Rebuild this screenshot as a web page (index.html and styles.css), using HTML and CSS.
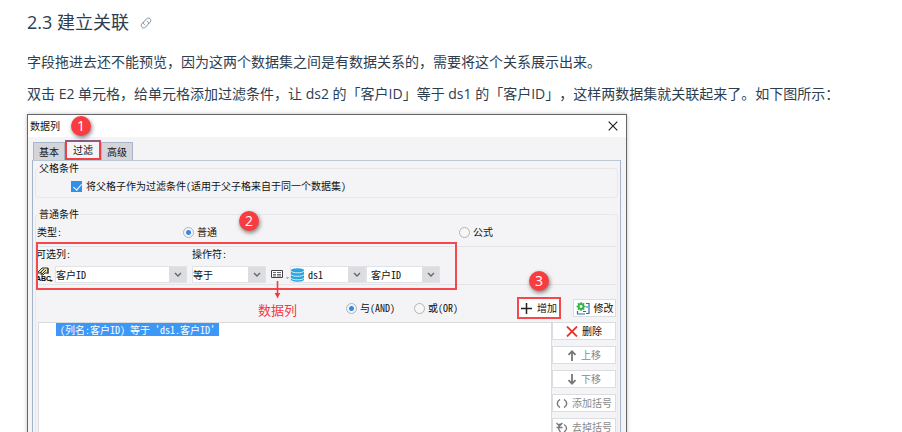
FILE: index.html
```html
<!DOCTYPE html>
<html lang="zh-CN">
<head>
  <meta charset="UTF-8" />
  <title>建立关联</title>
  <link rel="stylesheet" href="styles.css">
</head>
<body>
  <main class="article">
    <h3 class="title">2.3 建立关联
      <a class="anchor" href="#" aria-label="2.3 建立关联">
        <svg width="12" height="12" viewBox="0 0 24 24" fill="none" stroke="currentColor" stroke-width="2" stroke-linecap="round">
          <path d="M9 15.5c-2.6-1.7-2.600-4.600-.7-6.500l4.600-5.200c2-2.200 5-2.300 7-.5s2.200 4.800.3 7l-3 3.400"/>
          <path d="M15 8.500c2.600 1.700 2.600 4.600.7 6.500l-4.600 5.200c-2 2.200-5 2.300-7 .5s-2.200-4.800-.3-7l3-3.400"/>
        </svg>
      </a>
    </h3>
    <p>字段拖进去还不能预览，因为这两个数据集之间是有数据关系的，需要将这个关系展示出来。</p>
    <p>双击 E2 单元格，给单元格添加过滤条件，让 ds2 的「客户ID」等于 ds1 的「客户ID」，这样两数据集就关联起来了。如下图所示：</p>

    <!-- 数据列 对话框 -->
    <section class="dialog">
      <span class="badge badge-1">1</span>
      <header class="dialog-title">
        <span>数据列</span>
        <button class="close" aria-label="关闭">
          <svg width="10" height="10" viewBox="0 0 10 10" stroke="#222" stroke-width="1.2"><path d="M.7.7l8.600 8.600M9.300.7L.7 9.300"/></svg>
        </button>
      </header>
      <nav class="tabs">
        <button class="tab">基本</button>
        <button class="tab active">过滤</button>
        <button class="tab">高级</button>
      </nav>

      <div class="pane">
        <fieldset class="group">
          <legend>父格条件</legend>
          <label class="line parent-line"><input type="checkbox" checked>将父格子作为过滤条件(适用于父子格来自于同一个数据集)</label>
        </fieldset>

        <fieldset class="group group-main">
          <legend>普通条件</legend>
          <span class="badge badge-2">2</span>
          <div class="line type-line">
            <span>类型:</span>
            <label><input type="radio" name="type" checked>普通</label>
            <label><input type="radio" name="type">公式</label>
          </div>

          <div class="filter">
            <div class="filter-labels">
              <label for="column">可选列:</label>
              <label for="operator">操作符:</label>
            </div>
            <div class="filter-fields">
              <svg class="abc-icon" width="18" height="17" viewBox="0 0 18 17">
                <path d="M2 6l4-4h6v5H9L7 9H5l1-2H2z" fill="#e8dca8" stroke="#333"/>
                <path d="M4 7l4-4M6 8l4-4M12 2v6" stroke="#333"/>
                <text x="0" y="15" class="abc-text">ABC</text>
                <path d="M13 14h4l-2 2z" fill="#222"/>
              </svg>
              <span class="combo combo-column">
                <select id="column"><option>客户ID</option></select>
                <svg class="arrow" width="8" height="5" viewBox="0 0 8 5"><path d="M1 1l3 3 3-3"/></svg>
              </span>
              <span class="combo combo-operator">
                <select id="operator"><option>等于</option></select>
                <svg class="arrow" width="8" height="5" viewBox="0 0 8 5"><path d="M1 1l3 3 3-3"/></svg>
              </span>
              <svg class="field-icon" width="18" height="9" viewBox="0 0 18 9">
                <path d="M.5.5h11v7H.5z" fill="#fff" stroke="#444"/>
                <path d="M2 2.500h3M2 4.500h3M2 6h3M6 2.500h4M6 4.500h4M6 6h4" stroke="#444" stroke-width=".8"/>
                <path d="M15 7h3l-1 2h-1z" fill="#aaa"/>
              </svg>
              <span class="combo combo-dataset">
                <svg class="db-icon" width="13" height="14" viewBox="0 0 13 14">
                  <path d="M0 2.500C0-.4 13-.4 13 2.500v9c0 3-13 3-13 0z" fill="#2aa5e0"/>
                  <path d="M0 3c1 2.400 12 2.400 13 0M0 6.500c1 2.400 12 2.400 13 0M0 10c1 2.400 12 2.400 13 0" fill="none" stroke="#fff" stroke-width=".8"/>
                </svg>
                <select aria-label="数据集"><option>ds1</option></select>
                <svg class="arrow" width="8" height="5" viewBox="0 0 8 5"><path d="M1 1l3 3 3-3"/></svg>
              </span>
              <span class="combo combo-field">
                <select aria-label="字段"><option>客户ID</option></select>
                <svg class="arrow" width="8" height="5" viewBox="0 0 8 5"><path d="M1 1l3 3 3-3"/></svg>
              </span>
            </div>
            <div class="mark"></div>
            <div class="note">
              <svg width="7" height="18" viewBox="0 0 7 18"><path d="M3.500 0v13" stroke="#f5393d" stroke-width="1.600"/><path d="M.7 12h5.600L3.500 17.500z" fill="#f5393d"/></svg>
              <span>数据列</span>
            </div>
            <span class="badge badge-3">3</span>
          </div>

          <div class="logic">
            <label><input type="radio" name="logic" checked>与(AND)</label>
            <label><input type="radio" name="logic">或(OR)</label>
            <button class="btn add">
              <svg width="11" height="11" viewBox="0 0 11 11" stroke="#222" stroke-width="1.500"><path d="M5.500 0v11M0 5.500h11"/></svg>增加
            </button>
            <button class="btn edit">
              <svg width="14" height="13" viewBox="0 0 14 13">
                <path d="M10 1.500h3v10H10M1.500 9v3" fill="none" stroke="#1b75b5" stroke-width="1.200"/>
                <path d="M1 12h8M10 5h2M7 9.500h3" stroke="#1b75b5" stroke-width="1.200"/>
                <circle cx="5" cy="4.500" r="2.400" fill="none" stroke="#35b548" stroke-width="2"/>
                <path d="M5 0v2M5 7v2M.5 4.500h2M7.500 4.500h2M1.800 1.300l1.400 1.400M6.800 6.300l1.400 1.400M8.200 1.300L6.800 2.700M3.200 6.300L1.800 7.700" stroke="#35b548" stroke-width="1.300"/>
              </svg>修改
            </button>
          </div>

          <div class="result">
            <div class="tree">
              <span class="tree-item">(列名:客户ID) 等于 'ds1.客户ID'</span>
            </div>
            <div class="actions">
              <button class="btn">
                <svg width="12" height="11" viewBox="0 0 12 11" stroke="#e8352e" stroke-width="1.800"><path d="M1 .5l10 10M11 .5l-10 10"/></svg>删除
              </button>
              <button class="btn" disabled>
                <svg width="10" height="11" viewBox="0 0 10 11" fill="none" stroke="#777" stroke-width="1.800"><path d="M5 11V1M1.500 4.800L5 1.300l3.500 3.500"/></svg>上移
              </button>
              <button class="btn" disabled>
                <svg width="10" height="11" viewBox="0 0 10 11" fill="none" stroke="#777" stroke-width="1.800"><path d="M5 0v10M1.500 6.200L5 9.700l3.500-3.500"/></svg>下移
              </button>
              <button class="btn" disabled>
                <svg width="12" height="9" viewBox="0 0 12 9" fill="none" stroke="#777" stroke-width="1.400"><path d="M4 .5C.4 2.500.4 6.500 4 8.500M8 .5c3.600 2 3.600 6 0 8"/></svg>添加括号
              </button>
              <button class="btn" disabled>
                <svg width="12" height="11" viewBox="0 0 12 11" fill="none" stroke="#777" stroke-width="1.300"><path d="M4.500 1.500C2 4 2 7.500 4.500 10M8 2.500c3.400 2 3.400 5.500 0 7.500M.5 1l3 3 3-3M.5 5.500h6"/></svg>去掉括号
              </button>
            </div>
          </div>
        </fieldset>
      </div>
    </section>
  </main>
</body>
</html>
```

FILE: styles.css
```css
* {
  box-sizing: border-box;
}
body {
  margin: 0;
  height: 100vh;
  overflow: hidden;
  background: #fff;
  color: #2c3e50;
  font-family: "Open Sans", "Noto Sans CJK SC", sans-serif;
  font-size: 14px;
  text-spacing-trim: space-all;
}
.article {
  padding: 6px 27px 0;
}
.title {
  margin: 0 0 12px;
  font-size: 18px;
  font-weight: 400;
  line-height: 32px;
}
.anchor {
  margin-left: 6px;
  color: #7f8ba3;
}
p {
  margin: 0 0 8px;
  line-height: 24px;
}

/* dialog */
.dialog {
  position: relative;
  max-width: 600px;
  height: 400px;
  border: 1px solid #666;
  background: #f4f4f6;
  box-shadow: 0 0 4px rgba(0, 0, 0, 0.25);
  color: #111;
  font-family: "Noto Sans Mono CJK SC", "Noto Sans CJK SC", sans-serif;
  font-size: 10px;
  line-height: 14px;
}
button, select {
  font: inherit;
  color: inherit;
}
input {
  appearance: none;
  margin: 0;
  flex: none;
}
label {
  display: flex;
  align-items: center;
}
.dialog-title {
  display: flex;
  align-items: center;
  justify-content: space-between;
  height: 22px;
  padding: 0 8px 0 2px;
  background: #fff;
}
.close {
  display: flex;
  padding: 0;
  border: 0;
  background: none;
}
.tabs {
  display: flex;
  align-items: flex-end;
  height: 23px;
  padding-left: 5px;
}
.tab {
  width: 32px;
  height: 18px;
  padding: 0;
  border: 1px solid #a9b6c8;
  border-bottom: 0;
  background: #d4d5da;
}
.tab.active {
  width: 36px;
  height: 20px;
  border: 2px solid #f04045;
  border-top-color: #8c5a86;
  background: #f4f4f6;
  line-height: 12px;
}
.pane {
  height: 350px;
  margin: 0 5px 0 4px;
  padding: 0 2px;
  border: 1px solid #a3b4ca;
  border-top-color: #bcc7d6;
}

/* groups */
.group {
  min-width: 0;
  margin: 0 0 9px;
  padding: 0;
  border: 1px solid #e7e7ea;
  border-radius: 4px;
}
.group legend {
  margin-left: 2px;
  padding: 0 1px;
}
.line {
  height: 22px;
}
.parent-line {
  gap: 4px;
  padding-left: 35px;
}
.group-main {
  position: relative;
  height: 330px;
}
.type-line {
  display: grid;
  grid-template-columns: 146px 276px 1fr;
  align-items: center;
  padding-left: 1px;
}
.type-line label, .logic label {
  gap: 3px;
}
input[type="checkbox"] {
  width: 11px;
  height: 11px;
  background: #3390e8;
}
input[type="checkbox"]:checked::after {
  content: "";
  display: block;
  width: 4px;
  height: 7px;
  margin: 1px 0 0 4px;
  border: solid #fff;
  border-width: 0 1px 1px 0;
  transform: rotate(40deg);
}
input[type="radio"] {
  width: 11px;
  height: 11px;
  border: 1px solid #b4b4b6;
  border-radius: 50%;
  background: #f7f7f7;
}
input[type="radio"]:checked {
  background: radial-gradient(circle, #3b86e0 0 2px, #f0f5fc 3px);
}

/* filter row */
.filter {
  position: relative;
  height: 39px;
  margin: 3px 1px 0 0;
  border: solid #e4e4e7;
  border-width: 1px 0;
}
.filter-labels {
  display: grid;
  grid-template-columns: 156px 1fr;
}
.filter-fields {
  display: flex;
  align-items: center;
  height: 17px;
  margin-top: 5px;
}
.abc-icon {
  margin-right: 1px;
}
.abc-text {
  font: bold 7px "Liberation Sans", sans-serif;
}
.combo {
  position: relative;
  display: flex;
  align-items: center;
  height: 17px;
  border: 1px solid #e1e2e5;
  background: #fff;
}
.combo select {
  flex: 1;
  min-width: 0;
  height: 15px;
  padding: 0;
  appearance: none;
  border: 0;
  border-radius: 0;
  background: linear-gradient(#dcdde0, #dcdde0) right / 17px 100% no-repeat;
}
.arrow {
  position: absolute;
  right: 4px;
  top: 5px;
  fill: none;
  stroke: #666;
  stroke-width: 1.4;
  pointer-events: none;
}
.combo-column {
  width: 132px;
  margin-right: 5px;
}
.combo-operator {
  width: 74px;
  margin-right: 5px;
}
.combo-dataset {
  width: 76px;
  margin-left: 1px;
  gap: 4px;
}
.combo-field {
  width: 74px;
  padding-left: 4px;
}

/* red notes */
.mark {
  position: absolute;
  left: 0;
  top: -5px;
  width: 421px;
  height: 48px;
  border: 2px solid #f5484c;
}
.note {
  position: absolute;
  left: 222px;
  top: 34px;
  display: flex;
  flex-direction: column;
  align-items: center;
  gap: 4px;
  color: #f5393d;
  font-size: 13px;
}
.badge {
  position: absolute;
  z-index: 1;
  width: 20px;
  height: 20px;
  border-radius: 50%;
  background: #f93c40;
  box-shadow: 1px 2px 4px rgba(0, 0, 0, 0.5);
  color: #fff;
  font: 14px/20px "Open Sans", sans-serif;
  text-align: center;
}
.badge-1 {
  left: 43px;
  top: 1px;
}
.badge-2 {
  left: 203px;
  top: -10px;
}
.badge-3 {
  left: 493px;
  top: 24px;
}

/* logic row and buttons */
.logic {
  display: flex;
  align-items: center;
  height: 18px;
  margin: 14px 1px 5px 310px;
}
.logic label:first-child {
  width: 68px;
}
.btn {
  display: flex;
  align-items: center;
  justify-content: center;
  gap: 4px;
  height: 18px;
  padding: 0;
  border: 1px solid #dcdde0;
  background: #fff;
  white-space: nowrap;
}
.btn:disabled {
  color: #8a8a8a;
}
.add {
  gap: 5px;
  width: 44px;
  height: 22px;
  margin-left: auto;
  border: 2px solid #f5484c;
}
.edit {
  width: 43px;
  margin-left: 12px;
}
.result {
  display: flex;
  height: 200px;
  margin: 0 1px 0 2px;
}
.tree {
  flex: 1;
  border: 1px solid #d9dade;
  background: #fff;
}
.tree-item {
  display: inline-block;
  height: 13px;
  margin-left: 17px;
  padding: 0 4px;
  background: #3c97f7;
  color: #fff;
  line-height: 13px;
  white-space: pre;
}
.actions {
  display: flex;
  flex-direction: column;
  gap: 6px;
  width: 64px;
}
```
